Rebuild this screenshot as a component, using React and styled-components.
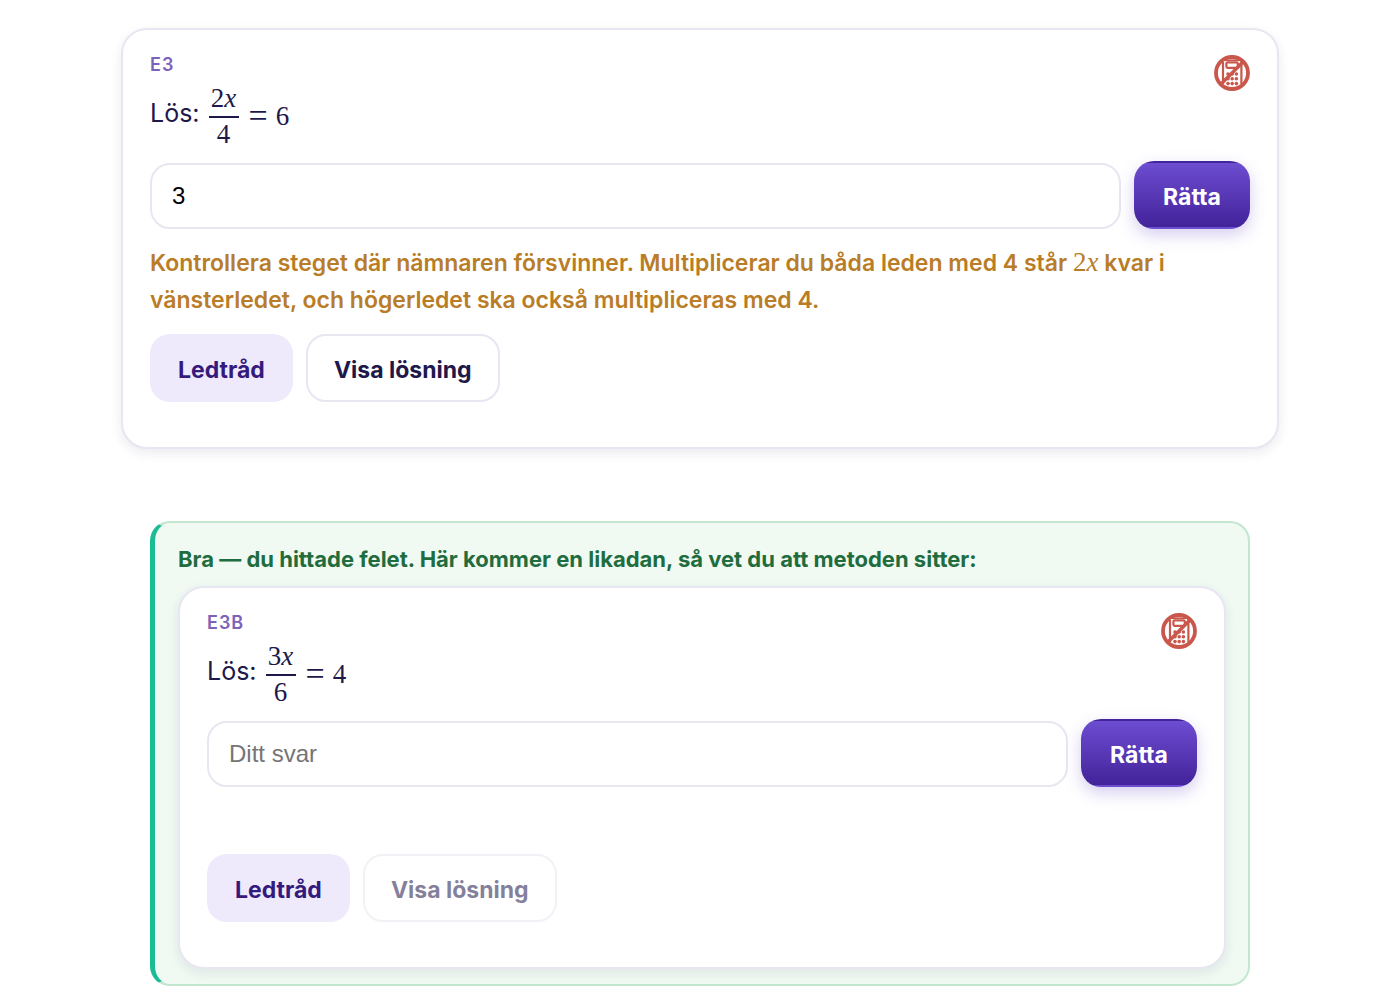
import React, { useState } from 'react';
import styled, { createGlobalStyle, css } from 'styled-components';

const GlobalStyle = createGlobalStyle`
  * {
    box-sizing: border-box;
  }

  body {
    margin: 0;
    background: #fff;
    color: #21184a;
    font-family: Inter, "Liberation Sans", sans-serif;
  }
`;

const Page = styled.main`
  max-width: 1206px;
  margin: 0 auto;
  padding: 28px 24px 14px;
`;

const Card = styled.article`
  padding: 25px 27px 45px;
  background: #fff;
  border: 2px solid #e8e6f0;
  border-radius: 26px;
  box-shadow: 0 4px 12px rgba(33, 24, 74, 0.09);
`;

const CardTop = styled.header`
  display: flex;
  justify-content: space-between;
  align-items: flex-start;
  margin-bottom: 11px;
`;

const Tag = styled.div`
  margin-bottom: 7px;
  color: #7c62b8;
  font-size: 18px;
  font-weight: 600;
  line-height: 20px;
  letter-spacing: 1px;
`;

const Question = styled.div`
  display: flex;
  align-items: center;
  gap: 9px;
`;

const Prompt = styled.span`
  padding-bottom: 6px;
  font-size: 25px;
  line-height: 36px;
`;

const mathFont = css`
  font-family: "Liberation Serif", "Times New Roman", serif;
  font-size: 27px;
  font-weight: 400;
  line-height: 32px;
`;

const Equation = styled.span`
  ${mathFont}
  display: flex;
  align-items: center;
`;

const Fraction = styled.span`
  display: flex;
  flex-direction: column;
  min-width: 30px;
  text-align: center;
`;

const Numerator = styled.span`
  padding-bottom: 2px;
  border-bottom: 2px solid currentColor;
`;

const Equals = styled.span`
  margin: 0 8px 0 10px;
  font-size: 34px;
`;

const InlineMath = styled.span`
  ${mathFont}
  line-height: 1;
`;

const AnswerRow = styled.form`
  display: flex;
  align-items: flex-end;
  gap: 13px;
`;

const AnswerInput = styled.input`
  flex: 1;
  min-width: 0;
  height: 66px;
  padding: 0 20px;
  background: #fff;
  border: 2px solid #e8e6f0;
  border-radius: 20px;
  color: #000;
  font-family: "Liberation Sans", Arial, sans-serif;
  font-size: 24px;

  &::placeholder {
    color: #757575;
  }
`;

const Button = styled.button`
  height: 68px;
  padding: 3px 26px 0;
  border: 2px solid transparent;
  border-radius: 20px;
  font-family: inherit;
  font-size: 23px;
  font-weight: 700;
  cursor: pointer;

  ${props => props.$variant === 'primary' && css`
    min-width: 116px;
    background: linear-gradient(#6d4dd0, #43239a);
    color: #fff;
    box-shadow: 0 6px 16px rgba(91, 61, 190, 0.25);
  `}

  ${props => props.$variant === 'soft' && css`
    background: #eee9fb;
    color: #351a7d;
  `}

  ${props => props.$variant === 'outline' && css`
    background: #fff;
    border-color: #e8e6f0;
    color: #21184a;
  `}

  &:disabled {
    opacity: 0.55;
    cursor: default;
  }
`;

const Feedback = styled.div`
  min-height: 36px;
  margin: 16px 0 15px;
  color: #b97d27;
  font-size: 23px;
  font-weight: 600;
  line-height: 37px;
`;

const Actions = styled.div`
  display: flex;
  gap: 13px;
`;

const FollowUp = styled.section`
  margin: 72px 29px 0;
  padding: 18px 22px 15px 23px;
  background: #f0faf3;
  border: 2px solid #c3e6cf;
  border-left: 5px solid #1abc94;
  border-radius: 20px;
`;

const FollowUpTitle = styled.h2`
  margin: 0 0 8px;
  color: #1f6d3e;
  font-size: 22px;
  font-weight: 700;
  line-height: 37px;
`;

const NoCalculator = styled.svg`
  flex: none;
  width: 36px;
  height: 36px;
  color: #c9574b;
`;

const NoCalculatorIcon = () => (
  <NoCalculator viewBox="0 0 36 36" fill="none" stroke="currentColor" role="img" aria-label="Utan räknare">
    <circle cx="18" cy="18" r="16" strokeWidth="3.8" />
    <path d="M9 7v22M27.4 7v22" strokeWidth="2.2" />
    <path d="M10.5 5.2h15" strokeWidth="1.6" />
    <rect x="12.4" y="7.4" width="11.4" height="5.4" rx="1.2" strokeWidth="2.2" />
    <g fill="currentColor" stroke="none">
      <circle cx="14" cy="19" r="1.8" />
      <circle cx="18.2" cy="19" r="1.8" />
      <circle cx="22.4" cy="19" r="1.8" />
      <circle cx="14" cy="23.8" r="1.8" />
      <circle cx="18.2" cy="23.8" r="1.8" />
      <circle cx="22.4" cy="23.8" r="1.8" />
      <circle cx="14" cy="28.6" r="1.8" />
      <circle cx="18.2" cy="28.6" r="1.8" />
      <circle cx="22.4" cy="28.6" r="1.8" />
    </g>
    <path d="M6.5 29.5l23-23" strokeWidth="3.4" />
  </NoCalculator>
);

const Exercise = ({ tag, factor, divisor, result, initialAnswer = '', feedback, solutionLocked }) => {
  const [answer, setAnswer] = useState(initialAnswer);

  return (
    <Card>
      <CardTop>
        <div>
          <Tag>{tag}</Tag>
          <Question>
            <Prompt>Lös:</Prompt>
            <Equation>
              <Fraction>
                <Numerator>{factor}<i>x</i></Numerator>
                <span>{divisor}</span>
              </Fraction>
              <Equals>=</Equals>
              <span>{result}</span>
            </Equation>
          </Question>
        </div>
        <NoCalculatorIcon />
      </CardTop>
      <AnswerRow onSubmit={e => e.preventDefault()}>
        <AnswerInput
          type="text"
          aria-label={`Svar på ${tag}`}
          placeholder="Ditt svar"
          value={answer}
          onChange={e => setAnswer(e.target.value)}
        />
        <Button type="submit" $variant="primary">Rätta</Button>
      </AnswerRow>
      <Feedback aria-live="polite">{feedback}</Feedback>
      <Actions>
        <Button type="button" $variant="soft">Ledtråd</Button>
        <Button type="button" $variant="outline" disabled={solutionLocked}>Visa lösning</Button>
      </Actions>
    </Card>
  );
};

const App = () => (
  <>
    <GlobalStyle />
    <Page>
      <Exercise
        tag="E3"
        factor={2}
        divisor={4}
        result={6}
        initialAnswer="3"
        feedback={(
          <>
            Kontrollera steget där nämnaren försvinner. Multiplicerar du båda leden med 4 står{' '}
            <InlineMath>2<i>x</i></InlineMath> kvar i vänsterledet, och högerledet ska också multipliceras med 4.
          </>
        )}
      />
      <FollowUp>
        <FollowUpTitle>Bra — du hittade felet. Här kommer en likadan, så vet du att metoden sitter:</FollowUpTitle>
        <Exercise tag="E3B" factor={3} divisor={6} result={4} solutionLocked />
      </FollowUp>
    </Page>
  </>
);

export default App;
